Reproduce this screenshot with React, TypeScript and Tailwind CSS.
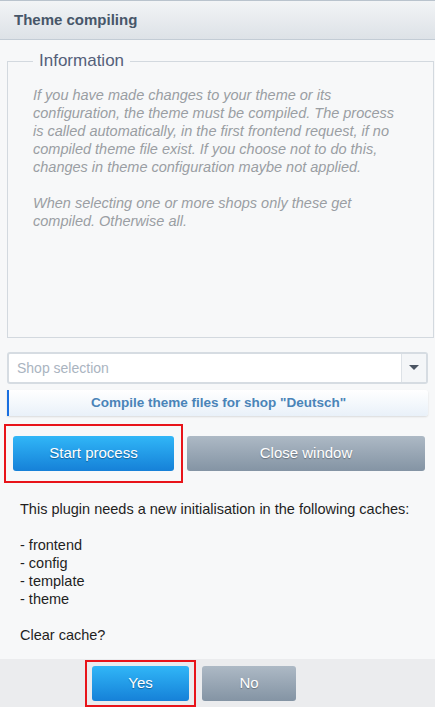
const font = { fontFamily: '"Liberation Sans", Arial, sans-serif' };

function BlueButton({ label, className }: { label: string; className: string }) {
  return (
    <button
      className={`rounded-[3px] bg-gradient-to-b from-[#31b6f7] to-[#1681d8] text-white [text-shadow:0_1px_1px_rgba(0,0,0,0.35)] ${className}`}
    >
      {label}
    </button>
  );
}

function GreyButton({ label, className }: { label: string; className: string }) {
  return (
    <button
      className={`rounded-[3px] bg-gradient-to-b from-[#adb9c5] to-[#8494a4] text-white [text-shadow:0_1px_1px_rgba(0,0,0,0.3)] ${className}`}
    >
      {label}
    </button>
  );
}

export default function App() {
  const caches = ['frontend', 'config', 'template', 'theme'];

  return (
    <div className="flex h-[707px] w-[435px] flex-col overflow-hidden bg-[#f7f8f9]" style={font}>
      <div className="flex h-[40px] shrink-0 items-center border-t border-b border-t-[#b9c3cd] border-b-[#c3ccd5] bg-gradient-to-b from-[#f2f4f6] to-[#dde2e7] pl-[14px]">
        <h1 className="text-[15px] font-bold text-[#475669]">Theme compiling</h1>
      </div>

      <div className="flex flex-col px-[7px] pt-[11px]">
        <fieldset className="-mr-[6px] h-[287px] border border-[#d3d9df] pl-[25px] pr-[33px]">
          <legend className="px-[6px] text-[17px] leading-[20px] text-[#54607a]">Information</legend>
          <div className="pt-[15px] text-[14.5px] italic leading-[18px] text-[#9a9ea3]">
            <p>
              If you have made changes to your theme or its configuration, the theme must be compiled. The process is
              called automatically, in the first frontend request, if no compiled theme file exist. If you choose not to
              do this, changes in theme configuration maybe not applied.
            </p>
            <p className="mt-[18px]">When selecting one or more shops only these get compiled. Otherwise all.</p>
          </div>
        </fieldset>

        <div className="mt-[14px] flex h-[32px] rounded-[3px] border-2 border-[#d6dce2] bg-white">
          <div className="flex flex-1 items-center pl-[8px] text-[14px] text-[#aab4bf]">Shop selection</div>
          <div className="flex w-[25px] items-center justify-center border-l border-[#dde2e7] bg-[#f4f6f8]">
            <svg width="10" height="6" viewBox="0 0 10 6">
              <path d="M0 0 L10 0 L5 5 Z" fill="#4b5563" />
            </svg>
          </div>
        </div>

        <div className="mt-[6px] flex h-[26px] items-center justify-center rounded-r-[3px] border-l-2 border-[#1a6fe0] bg-gradient-to-b from-white to-[#e9f1f9] shadow-[0_1px_2px_rgba(0,0,0,0.12)]">
          <span className="text-[13.5px] font-bold text-[#4a84b8]">Compile theme files for shop "Deutsch"</span>
        </div>

        <div className="mt-[8px] flex items-center gap-[4px]">
          <div className="-ml-[3px] border-2 border-[#e8141a] px-[7px] py-[10px]">
            <BlueButton label="Start process" className="h-[35px] w-[161px] text-[15px]" />
          </div>
          <GreyButton label="Close window" className="h-[35px] w-[238px] text-[15px]" />
        </div>
      </div>

      <div className="flex-1 pl-[20px] pr-[6px] pt-[17px] text-[14.5px] leading-[18px] text-[#1f1f1f]">
        <p>This plugin needs a new initialisation in the following caches:</p>
        <div className="mt-[18px]">
          {caches.map((c) => (
            <p key={c}>- {c}</p>
          ))}
        </div>
        <p className="mt-[18px]">Clear cache?</p>
      </div>

      <div className="flex h-[48px] shrink-0 items-center bg-[#ebecee] pl-[85px]">
        <div className="border-2 border-[#e8141a] px-[5px] py-[4px]">
          <BlueButton label="Yes" className="h-[35px] w-[97px] text-[15px]" />
        </div>
        <GreyButton label="No" className="ml-[6px] h-[35px] w-[94px] text-[15px]" />
      </div>
    </div>
  );
}
